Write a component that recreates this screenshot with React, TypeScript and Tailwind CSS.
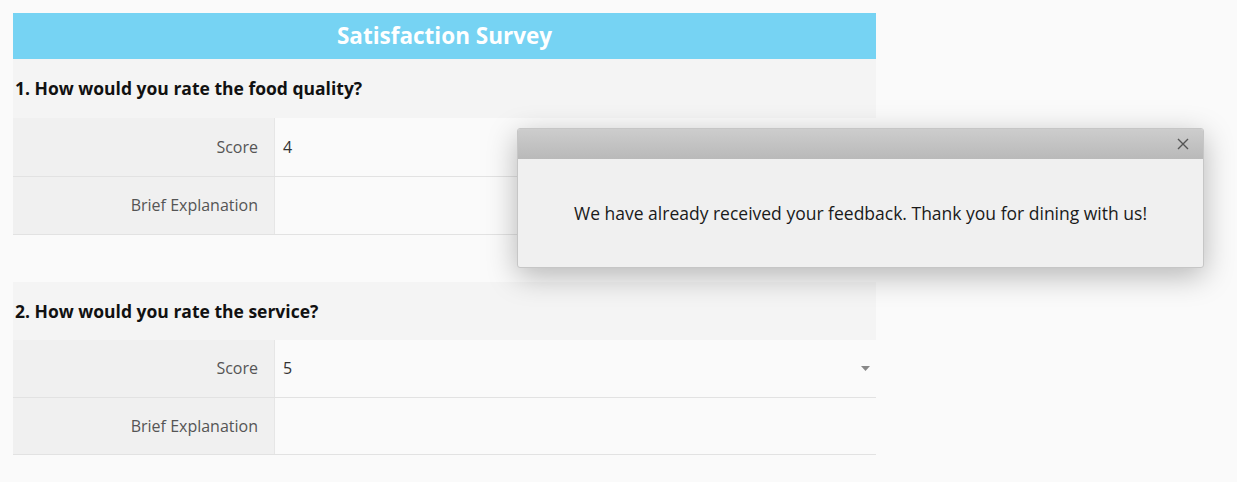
const font = { fontFamily: '"Open Sans", "Liberation Sans", sans-serif' };

type Question = { title: string; score: string; head: string; row: string };

const questions: Question[] = [
  { title: "1. How would you rate the food quality?", score: "4", head: "h-[59px]", row: "h-[58.5px]" },
  { title: "2. How would you rate the service?", score: "5", head: "h-[58px]", row: "h-[57.5px]" },
];

const Row = ({ label, h, children }: { label: string; h: string; children?: React.ReactNode }) => (
  <div className={`flex ${h} border-b border-[#e2e2e2]`}>
    <div className="flex w-[262px] shrink-0 items-center justify-end border-r border-[#e6e6e6] bg-[#f0f0f0] pr-4 text-[16px] text-[#555]">
      {label}
    </div>
    <div className="flex flex-1 items-center bg-[#fafafa] pl-2 pr-[6px] text-[16px] text-[#333]">
      {children}
    </div>
  </div>
);

const Block = ({ q }: { q: Question }) => (
  <div>
    <div className={`flex ${q.head} items-center bg-[#f4f4f4] pl-[2px] text-[17.5px] font-bold text-[#111]`}>
      {q.title}
    </div>
    <Row label="Score" h={q.row}>
      <span className="flex-1">{q.score}</span>
      <svg width="9" height="5" viewBox="0 0 9 5">
        <path d="M0 0h9L4.5 5z" fill="#888" />
      </svg>
    </Row>
    <Row label="Brief Explanation" h={q.row} />
  </div>
);

export default function App() {
  return (
    <div className="relative h-[482px] w-[1237px] overflow-hidden bg-[#fafafa]" style={font}>
      <div className="ml-[13px] w-[863px] pt-[13px]">
        <div className="flex h-[46px] items-center justify-center bg-[#76d3f3] text-[22.5px] font-bold text-white">
          Satisfaction Survey
        </div>
        <div className="flex flex-col gap-[47px]">
          {questions.map((q) => (
            <Block key={q.title} q={q} />
          ))}
        </div>
      </div>

      <div className="absolute left-[517px] top-[128px] w-[687px] overflow-hidden rounded-[3px] border border-[#c6c6c6] bg-[#f0f0f0] shadow-[0_8px_30px_rgba(0,0,0,0.28)]">
        <div className="flex h-[30px] items-center justify-end bg-gradient-to-b from-[#cdcdcd] to-[#b9b9b9] pr-[14px]">
          <svg width="12" height="12" viewBox="0 0 12 12">
            <path d="M1 1l10 10M11 1L1 11" stroke="#555" strokeWidth="1.4" />
          </svg>
        </div>
        <div className="flex h-[108px] items-center justify-center text-[17.5px] text-[#1a1a1a]">
          We have already received your feedback. Thank you for dining with us!
        </div>
      </div>
    </div>
  );
}
